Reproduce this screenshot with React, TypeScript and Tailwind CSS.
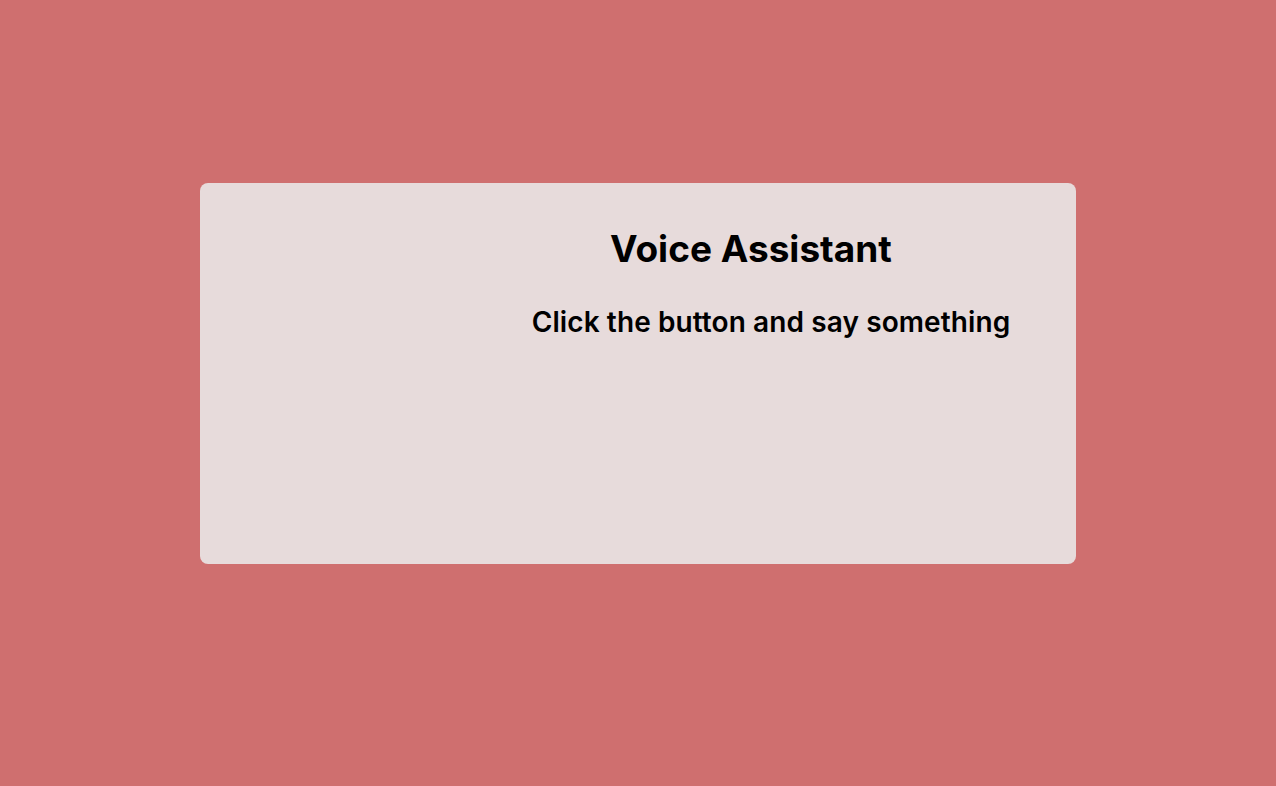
import React from 'react';

const App = () => {
  return (
    <div
      className="flex min-h-screen w-full justify-center bg-[#cf6f6f] pt-[183px]"
      style={{ fontFamily: 'Inter, "Noto Sans", sans-serif' }}
    >
      <div className="flex h-[381px] w-[876px] rounded-lg bg-[#e7dbdb]">
        <div className="w-[266px] shrink-0" />
        <div className="flex flex-1 flex-col items-center pt-[46px]">
          <h1 className="pr-[40px] text-[37px] leading-[40px] font-bold text-black">
            Voice Assistant
          </h1>
          <p className="mt-[37px] text-[28px] leading-[32px] font-semibold tracking-[0.1px] text-black">
            Click the button and say something
          </p>
        </div>
      </div>
    </div>
  );
};

export default App;
